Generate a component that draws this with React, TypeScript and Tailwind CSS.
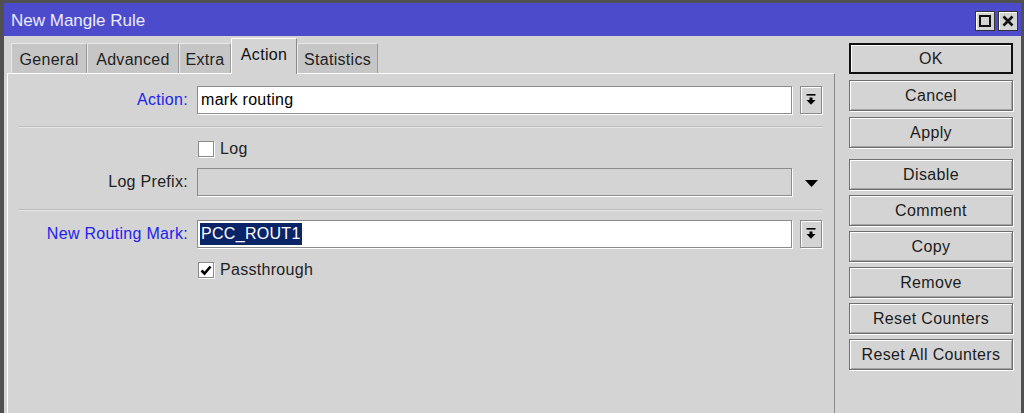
import React from "react";

const btn =
  "h-[31px] w-[164px] flex items-center justify-center bg-[#d4d4d4] border border-[#6e6e6e] shadow-[inset_1px_1px_0_#ffffff,inset_-1px_-1px_0_#a4a4a4,1px_1px_0_#ffffff] text-[16px] tracking-[0.35px] text-[#1c1c1c]";

function DropBtn() {
  return (
    <div className="ml-[8px] w-[22px] h-[28px] flex items-center justify-center bg-[#d4d4d4] border border-[#8a8a8a] shadow-[inset_1px_1px_0_#ffffff,1px_1px_0_#ffffff]">
      <svg width="10" height="12" viewBox="0 0 10 12">
        <rect x="0.5" y="0" width="9" height="1.6" fill="#000" />
        <rect x="3.5" y="3.5" width="3" height="3" fill="#000" />
        <polygon points="0.5,6 9.5,6 5,10.8" fill="#000" />
      </svg>
    </div>
  );
}

function Tab({ label, w, active }: { label: string; w: number; active?: boolean }) {
  if (active) {
    return (
      <div
        className="h-[36px] relative z-10 flex items-center justify-center bg-[#d4d4d4] border-t border-l border-white border-r border-r-[#8a8a8a] text-[16px] tracking-[0.3px] text-[#111] pb-[4px]"
        style={{ width: w }}
      >
        {label}
      </div>
    );
  }
  return (
    <div
      className="h-[31px] flex items-center justify-center bg-[#c6c6c6] border-l border-t border-[#e8e8e8] border-r border-r-[#9a9a9a] text-[16px] tracking-[0.3px] text-[#222] pt-[2px]"
      style={{ width: w }}
    >
      {label}
    </div>
  );
}

export default function App() {
  return (
    <div className="w-[1024px] h-[413px] overflow-hidden bg-[#d4d4d4] flex flex-col border-t-[3px] border-l-[4px] border-r-[3px] border-[#505050] font-['Liberation_Sans',Arial,sans-serif]">
      {/* Title bar */}
      <div className="h-[33px] shrink-0 bg-[#4b4bcb] flex items-center pl-[7px] pr-[3px] pt-[2px]">
        <span className="text-[17px] text-[#ececff]">New Mangle Rule</span>
        <div className="ml-auto flex gap-[3px]">
          <div className="w-[20px] h-[20px] bg-[#d4d4d4] border border-[#333] flex items-center justify-center shadow-[inset_1px_1px_0_#ffffff]">
            <div className="w-[12px] h-[12px] border-2 border-[#111]" />
          </div>
          <div className="w-[20px] h-[20px] bg-[#d4d4d4] border border-[#333] flex items-center justify-center shadow-[inset_1px_1px_0_#ffffff]">
            <svg width="12" height="12" viewBox="0 0 12 12">
              <path d="M1.5 1.5 L10.5 10.5 M10.5 1.5 L1.5 10.5" stroke="#111" strokeWidth="2.6" />
            </svg>
          </div>
        </div>
      </div>

      {/* Body */}
      <div className="flex flex-1 min-h-0">
        {/* Left: tabs + panel */}
        <div className="w-[832px] flex flex-col">
          <div className="flex items-end pl-[7px] mt-[2px] -mb-px">
            <Tab label="General" w={76} />
            <Tab label="Advanced" w={92} />
            <Tab label="Extra" w={52} />
            <Tab label="Action" w={66} active />
            <Tab label="Statistics" w={81} />
          </div>
          <div className="ml-[3px] w-[828px] flex-1 border-l border-t border-white border-r border-r-[#8a8a8a] text-[16px] tracking-[0.3px]">
            {/* Action row */}
            <div className="flex items-center mt-[12px] h-[28px]">
              <div className="w-[180px] text-right text-[#2222ee]">Action:</div>
              <div className="ml-[9px] w-[595px] h-[28px] bg-white border border-[#8c8c8c] shadow-[1px_1px_0_#ffffff] flex items-center pl-[3px] text-black">
                mark routing
              </div>
              <DropBtn />
            </div>
            {/* separator */}
            <div className="ml-[11px] w-[804px] mt-[12px] border-t border-[#bcbcbc] border-b border-b-[#e6e6e6]" />
            {/* Log */}
            <div className="flex items-center mt-[13px] h-[16px]">
              <div className="ml-[190px] w-[16px] h-[16px] bg-white border border-[#8a8a8a] shadow-[1px_1px_0_#ffffff]" />
              <span className="ml-[6px] text-[#222]">Log</span>
            </div>
            {/* Log Prefix */}
            <div className="flex items-center mt-[11px] h-[28px]">
              <div className="w-[180px] text-right text-[#222]">Log Prefix:</div>
              <div className="ml-[9px] w-[595px] h-[28px] bg-[#d4d4d4] border border-[#8c8c8c] shadow-[1px_1px_0_#ffffff]" />
              <div className="ml-[8px] w-[22px] h-[28px] flex items-center justify-center pt-[2px]">
                <svg width="13" height="7" viewBox="0 0 13 7">
                  <polygon points="0,0 13,0 6.5,7" fill="#000" />
                </svg>
              </div>
            </div>
            {/* separator */}
            <div className="ml-[11px] w-[804px] mt-[13px] border-t border-[#bcbcbc] border-b border-b-[#e6e6e6]" />
            {/* New Routing Mark */}
            <div className="flex items-center mt-[9px] h-[28px]">
              <div className="w-[180px] text-right text-[#2222ee]">New Routing Mark:</div>
              <div className="ml-[9px] w-[595px] h-[28px] bg-white border border-[#8c8c8c] shadow-[1px_1px_0_#ffffff] flex items-center pl-[2px]">
                <span className="bg-[#0a2468] text-white px-[1px] leading-[22px]">PCC_ROUT1</span>
              </div>
              <DropBtn />
            </div>
            {/* Passthrough */}
            <div className="flex items-center mt-[14px] h-[16px]">
              <div className="ml-[190px] w-[16px] h-[16px] bg-white border border-[#8a8a8a] shadow-[1px_1px_0_#ffffff] flex items-center justify-center">
                <svg width="12" height="11" viewBox="0 0 12 11">
                  <path d="M1.5 5.5 L4.5 8.5 L10.5 1.5" stroke="#000" strokeWidth="2.6" fill="none" />
                </svg>
              </div>
              <span className="ml-[6px] text-[#222]">Passthrough</span>
            </div>
          </div>
        </div>

        {/* Right: buttons */}
        <div className="ml-[13px] pt-[7px] flex flex-col">
          <div className="flex flex-col gap-[6px]">
            <div className="h-[31px] w-[164px] flex items-center justify-center bg-[#d4d4d4] border-2 border-[#111] shadow-[inset_1px_1px_0_#ffffff] text-[16px] tracking-[0.35px] text-[#1c1c1c]">
              OK
            </div>
            <div className={btn}>Cancel</div>
            <div className={btn}>Apply</div>
          </div>
          <div className="flex flex-col gap-[5px] mt-[11px]">
            <div className={btn}>Disable</div>
            <div className={btn}>Comment</div>
            <div className={btn}>Copy</div>
            <div className={btn}>Remove</div>
            <div className={btn}>Reset Counters</div>
            <div className={btn}>Reset All Counters</div>
          </div>
        </div>
      </div>
    </div>
  );
}
